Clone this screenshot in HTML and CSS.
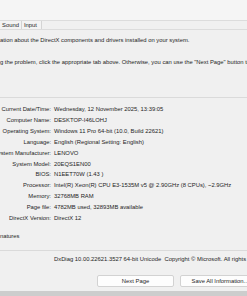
FILE: index.html
```html
<!DOCTYPE html>
<html lang="en">

<head>
    <meta charset="UTF-8">
    <meta name="viewport" content="width=device-width, initial-scale=1.0">
    <title>DirectX Diagnostic Tool</title>

    <link rel="stylesheet" href="styles.css">
</head>

<body>
    <div class="window">
        <div class="titlebar"></div>

        <nav class="tabs">
            <span class="tab">Sound</span>
            <span class="tab">Input</span>
        </nav>

        <section class="pane">
            <p class="intro">ation about the DirectX components and drivers installed on your system.</p>
            <p class="intro second">g the problem, click the appropriate tab above. Otherwise, you can use the "Next Page" button to visit each page in sequence.</p>

            <div class="rule"></div>

            <div class="info">
                <div class="label">Current Date/Time:</div><div class="value">Wednesday, 12 November 2025, 13:39:05</div>
                <div class="label">Computer Name:</div><div class="value">DESKTOP-I46LOHJ</div>
                <div class="label">Operating System:</div><div class="value">Windows 11 Pro 64-bit (10.0, Build 22621)</div>
                <div class="label">Language:</div><div class="value">English (Regional Setting: English)</div>
                <div class="label">System Manufacturer:</div><div class="value">LENOVO</div>
                <div class="label">System Model:</div><div class="value">20EQS1EN00</div>
                <div class="label">BIOS:</div><div class="value">N1EET70W (1.43 )</div>
                <div class="label">Processor:</div><div class="value">Intel(R) Xeon(R) CPU E3-1535M v5 @ 2.90GHz (8 CPUs), ~2.9GHz</div>
                <div class="label">Memory:</div><div class="value">32768MB RAM</div>
                <div class="label">Page file:</div><div class="value">4782MB used, 32893MB available</div>
                <div class="label">DirectX Version:</div><div class="value">DirectX 12</div>
            </div>

            <p class="whql">natures</p>
        </section>

        <div class="status">DxDiag 10.00.22621.3527 64-bit Unicode&nbsp; Copyright © Microsoft. All rights reserved.</div>

        <div class="actions">
            <button class="btn next">Next Page</button>
            <button class="btn save">Save All Information...</button>
        </div>

        <div class="taskbar"></div>
    </div>
</body>

</html>
```

FILE: styles.css
```css
* {
    box-sizing: border-box;
}

html,
body {
    margin: 0;
    padding: 0;
}

body {
    width: 247px;
    height: 296px;
    overflow: hidden;
    background: #f0f0f0;
    font-family: 'Liberation Sans', Arial, sans-serif;
    font-size: 5.85px;
    color: #1e1e1e;
}

.window {
    width: 247px;
    height: 296px;
    overflow: hidden;
    white-space: nowrap;
}

.titlebar {
    height: 21px;
    background: #f5f5f5;
    border-bottom: 1px solid #dcdcdc;
}

.tabs {
    display: flex;
    height: 9px;
    border-bottom: 1px solid #dcdcdc;
}

.tab {
    height: 8px;
    line-height: 8px;
    padding: 0 2px;
    border-right: 1px solid #d4d4d4;
    background: #f3f3f3;
}

.tab:first-child {
    width: 22px;
}

.tab + .tab {
    width: 20px;
}

.pane {
    padding-top: 6px;
}

p {
    margin: 0;
    line-height: 8px;
}

.intro.second {
    margin-top: 14px;
}

.rule {
    height: 1px;
    margin-top: 31px;
    background: #dadada;
}

.info {
    display: grid;
    grid-template-columns: 51px 1fr;
    column-gap: 3px;
    grid-auto-rows: 10.85px;
    margin-top: 6.4px;
    line-height: 10.85px;
}

.label {
    display: flex;
    justify-content: flex-end;
}

.whql {
    margin-top: 8.3px;
}

.status {
    margin-top: 10px;
    padding: 4px 0 0 54px;
    line-height: 8px;
    border-top: 1px solid #dadada;
}

.actions {
    display: flex;
    gap: 6px;
    margin-top: 12px;
    padding-left: 97px;
}

.btn {
    flex: none;
    height: 12px;
    padding: 0;
    border: 1px solid #d2d2d2;
    border-radius: 2px;
    background: #fdfdfd;
    font-family: 'Liberation Sans', Arial, sans-serif;
    font-size: 5.85px;
    color: #1e1e1e;
}

.next {
    width: 77px;
}

.save {
    width: 80px;
}

.taskbar {
    height: 6px;
    margin-top: 4px;
    background: #cdcdcd;
}
```
